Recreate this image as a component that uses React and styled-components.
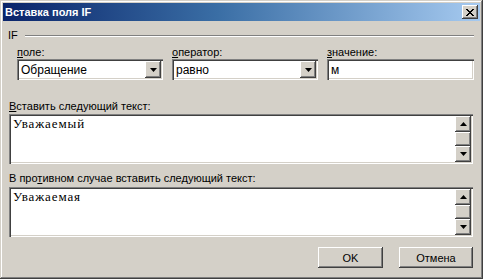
import React from 'react'
import styled, { createGlobalStyle } from 'styled-components'

const GlobalStyle = createGlobalStyle`
  html, body {
    margin: 0;
    padding: 0;
    background: #d4d0c8;
    overflow: hidden;
  }
  * { box-sizing: border-box; }
`

const raised = `
  background: #d4d0c8;
  box-shadow: inset -1px -1px #404040, inset 1px 1px #ffffff,
    inset -2px -2px #808080, inset 2px 2px #d4d0c8;
`

const sunken = `
  background: #ffffff;
  box-shadow: inset 1px 1px #808080, inset 2px 2px #404040,
    inset -1px -1px #ffffff, inset -2px -2px #d4d0c8;
`

const Window = styled.div`
  width: 483px;
  height: 279px;
  padding: 3px;
  display: flex;
  flex-direction: column;
  background: #d4d0c8;
  box-shadow: inset -1px -1px #404040, inset 1px 1px #d4d0c8,
    inset -2px -2px #808080, inset 2px 2px #ffffff;
  font-family: "Liberation Sans", Arial, sans-serif;
  font-size: 11px;
  color: #000;
`

const TitleBar = styled.div`
  height: 18px;
  display: flex;
  align-items: center;
  justify-content: space-between;
  padding: 0 2px 0 2px;
  background: linear-gradient(90deg, #0a246a 0%, #3a6ea5 45%, #a6caf0 100%);
`

const Title = styled.span`
  color: #fff;
  font-weight: bold;
  font-size: 11px;
  line-height: 14px;
`

const CloseButton = styled.div`
  ${raised}
  width: 16px;
  height: 14px;
  display: flex;
  align-items: center;
  justify-content: center;
`

const Body = styled.div`
  flex: 1;
  display: flex;
  flex-direction: column;
  padding: 0 6px 0 5px;
`

const GroupHeader = styled.div`
  display: flex;
  align-items: center;
  height: 13px;
  margin-top: 8px;
  line-height: 13px;
`

const GroupLine = styled.div`
  flex: 1;
  margin-left: 7px;
  border-top: 1px solid #808080;
  border-bottom: 1px solid #ffffff;
`

const Fields = styled.div`
  display: grid;
  grid-template-columns: 146px 146px 147px;
  column-gap: 9px;
  padding-left: 9px;
  margin-top: 4px;
`

const Field = styled.div`
  display: flex;
  flex-direction: column;
`

const Label = styled.div`
  height: 13px;
  line-height: 13px;
  white-space: nowrap;
  margin: ${p => p.$margin || '0'};

  u { text-decoration: underline; }
`

const Combo = styled.div`
  ${sunken}
  height: 21px;
  display: flex;
  align-items: center;
  padding: 2px;
`

const ComboText = styled.span`
  flex: 1;
  padding-left: 2px;
  font-size: 12px;
`

const DropButton = styled.div`
  ${raised}
  width: 16px;
  height: 17px;
  display: flex;
  align-items: center;
  justify-content: center;
`

const Input = styled.div`
  ${sunken}
  height: 21px;
  display: flex;
  align-items: center;
  padding: 2px 4px;
  font-size: 12px;
`

const Memo = styled.div`
  ${sunken}
  height: ${p => p.$h}px;
  margin: 0 1px 0 1px;
  padding: 2px;
  display: flex;
`

const MemoText = styled.div`
  flex: 1;
  padding: 1px 2px;
  font-family: "Liberation Serif", "Times New Roman", serif;
  font-size: 13px;
  letter-spacing: 0.9px;
  line-height: 14px;
`

const ScrollBar = styled.div`
  width: 16px;
  display: flex;
  flex-direction: column;
`

const ScrollButton = styled.div`
  ${raised}
  height: 16px;
  display: flex;
  align-items: center;
  justify-content: center;
`

const ScrollThumb = styled.div`
  ${raised}
  flex: 1;
`

const Buttons = styled.div`
  display: flex;
  justify-content: flex-end;
  gap: 16px;
  margin-top: 10px;
  padding-right: 1px;
`

const Button = styled.div`
  ${raised}
  width: ${p => p.$w}px;
  height: 21px;
  display: flex;
  align-items: center;
  justify-content: center;
`

const Arrow = ({ up }) => (
  <svg width="7" height="4" viewBox="0 0 7 4">
    <path d={up ? 'M3.5 0 L7 4 L0 4 Z' : 'M0 0 L7 0 L3.5 4 Z'} fill="#000" />
  </svg>
)

const CloseIcon = () => (
  <svg width="8" height="7" viewBox="0 0 8 7" shapeRendering="crispEdges">
    <path d="M0 0h2v1h-2zM6 0h2v1h-2zM1 1h2v1h-2zM5 1h2v1h-2zM2 2h4v1h-4zM3 3h2v1h-2zM2 4h4v1h-4zM1 5h2v1h-2zM5 5h2v1h-2zM0 6h2v1h-2zM6 6h2v1h-2z" fill="#000" />
  </svg>
)

const Scroller = () => (
  <ScrollBar>
    <ScrollButton><Arrow up /></ScrollButton>
    <ScrollThumb />
    <ScrollButton><Arrow /></ScrollButton>
  </ScrollBar>
)

const App = () => {
  return (
    <>
      <GlobalStyle />
      <Window>
        <TitleBar>
          <Title>Вставка поля IF</Title>
          <CloseButton><CloseIcon /></CloseButton>
        </TitleBar>
        <Body>
          <GroupHeader>
            <span>IF</span>
            <GroupLine />
          </GroupHeader>
          <Fields>
            <Field>
              <Label><u>п</u>оле:</Label>
              <Combo>
                <ComboText>Обращение</ComboText>
                <DropButton><Arrow /></DropButton>
              </Combo>
            </Field>
            <Field>
              <Label><u>о</u>ператор:</Label>
              <Combo>
                <ComboText>равно</ComboText>
                <DropButton><Arrow /></DropButton>
              </Combo>
            </Field>
            <Field>
              <Label><u>з</u>начение:</Label>
              <Input>м</Input>
            </Field>
          </Fields>
          <Label $margin="20px 0 1px 1px"><u>В</u>ставить следующий текст:</Label>
          <Memo $h={50}>
            <MemoText>Уважаемый</MemoText>
            <Scroller />
          </Memo>
          <Label $margin="8px 0 2px 1px">В про<u>т</u>ивном случае вставить следующий текст:</Label>
          <Memo $h={50}>
            <MemoText>Уважаемая</MemoText>
            <Scroller />
          </Memo>
          <Buttons>
            <Button $w={65}>OK</Button>
            <Button $w={74}>Отмена</Button>
          </Buttons>
        </Body>
      </Window>
    </>
  )
}

export default App
